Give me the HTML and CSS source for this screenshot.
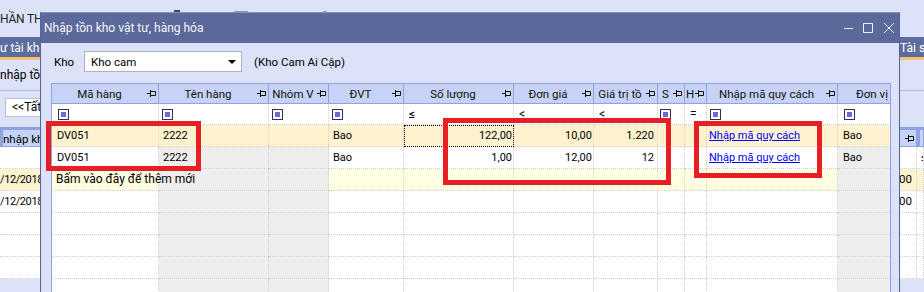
FILE: index.html
```html
<!DOCTYPE html>
<html lang="vi">
<head>
<meta charset="utf-8">
<title>Nhập tồn kho vật tư, hàng hóa</title>
<link rel="stylesheet" href="styles.css">
</head>
<body>
<div class="app">
  <div class="app-top">
    <span class="app-title">HẦN TH</span>
    <span class="tool tool-a"></span>
    <span class="tool tool-b"></span>
    <span class="tool tool-c"></span>
    <span class="tool tool-d"></span>
  </div>
  <div class="app-tabs">
    <span class="tab tab-left">ư tài kho</span>
    <span class="tab">Tài sả</span>
  </div>
  <div class="app-sub"><span class="sub-text">nhập tồn</span></div>
  <div class="app-filter"><span class="filter-box">&lt;&lt;Tất</span></div>
  <div class="app-grid">
    <div class="ag-row ag-head"><div class="ag-c">nhập kh</div><div class="ag-c ag-pin"><svg class="pin" viewBox="0 0 10 9"><path d="M0 4.5h3.5M3.5 1v7M3.5 2.5h5v4h-5"/></svg></div><div class="ag-c"></div></div>
    <div class="ag-row"><div class="ag-c"></div><div class="ag-c"></div><div class="ag-c ag-op">≤</div></div>
    <div class="ag-row ag-sel"><div class="ag-c ag-date">/12/2018</div><div class="ag-c ag-num">00</div><div class="ag-c"></div></div>
    <div class="ag-row"><div class="ag-c ag-date">/12/2018</div><div class="ag-c ag-num">00</div><div class="ag-c"></div></div>
    <div class="ag-row"><div class="ag-c"></div><div class="ag-c"></div><div class="ag-c"></div></div>
    <div class="ag-row"><div class="ag-c"></div><div class="ag-c"></div><div class="ag-c"></div></div>
    <div class="ag-row"><div class="ag-c"></div><div class="ag-c"></div><div class="ag-c"></div></div>
  </div>
</div>

<div class="dialog">
  <div class="titlebar">
    <span class="title">Nhập tồn kho vật tư, hàng hóa</span>
    <svg class="winctl" viewBox="0 0 52 11"><path d="M1 5.5h9M20.5 0.5h9v9h-9zM41 0l10 10M51 0l-10 10"/></svg>
  </div>
  <div class="dlg-body">
    <div class="kho-row">
      <span class="kho-label">Kho</span>
      <div class="combo"><span>Kho cam</span><span class="combo-arrow"></span></div>
      <span class="kho-name">(Kho Cam Ai Cập)</span>
    </div>

    <div class="grid">
      <div class="row">
        <div class="h"><span>Mã hàng</span><svg class="pin" viewBox="0 0 10 9"><path d="M0 4.5h3.5M3.5 1v7M3.5 2.5h5v4h-5"/></svg></div>
        <div class="h"><span>Tên hàng</span><svg class="pin" viewBox="0 0 10 9"><path d="M0 4.5h3.5M3.5 1v7M3.5 2.5h5v4h-5"/></svg></div>
        <div class="h"><span>Nhóm V</span><svg class="pin" viewBox="0 0 10 9"><path d="M0 4.5h3.5M3.5 1v7M3.5 2.5h5v4h-5"/></svg></div>
        <div class="h"><span>ĐVT</span><svg class="pin" viewBox="0 0 10 9"><path d="M0 4.5h3.5M3.5 1v7M3.5 2.5h5v4h-5"/></svg></div>
        <div class="h"><span>Số lượng</span><svg class="pin" viewBox="0 0 10 9"><path d="M0 4.5h3.5M3.5 1v7M3.5 2.5h5v4h-5"/></svg></div>
        <div class="h"><span>Đơn giá</span><svg class="pin" viewBox="0 0 10 9"><path d="M0 4.5h3.5M3.5 1v7M3.5 2.5h5v4h-5"/></svg></div>
        <div class="h"><span>Giá trị tồ</span><svg class="pin" viewBox="0 0 10 9"><path d="M0 4.5h3.5M3.5 1v7M3.5 2.5h5v4h-5"/></svg></div>
        <div class="h"><span>S</span><svg class="pin" viewBox="0 0 10 9"><path d="M0 4.5h3.5M3.5 1v7M3.5 2.5h5v4h-5"/></svg></div>
        <div class="h"><span>H</span><svg class="pin" viewBox="0 0 10 9"><path d="M0 4.5h3.5M3.5 1v7M3.5 2.5h5v4h-5"/></svg></div>
        <div class="h"><span>Nhập mã quy cách</span><svg class="pin" viewBox="0 0 10 9"><path d="M0 4.5h3.5M3.5 1v7M3.5 2.5h5v4h-5"/></svg></div>
        <div class="h"><span>Đơn vị</span><svg class="pin" viewBox="0 0 10 9"><path d="M0 4.5h3.5M3.5 1v7M3.5 2.5h5v4h-5"/></svg></div>
      </div>

      <div class="row f">
        <div class="c p6"><span class="chk"></span></div>
        <div class="c p3"><span class="chk"></span></div>
        <div class="c p3"><span class="chk"></span></div>
        <div class="c p3"><span class="chk"></span></div>
        <div class="c p5 op">≤</div>
        <div class="c p5 op">&lt;</div>
        <div class="c p5 op">&lt;</div>
        <div class="c p2"><span class="chk"></span></div>
        <div class="c p5 op">=</div>
        <div class="c p3"><span class="chk"></span></div>
        <div class="c p6"><span class="chk"></span></div>
      </div>

      <div class="row sel">
        <div class="c p5">DV051</div>
        <div class="c g">2222</div>
        <div class="c g"></div>
        <div class="c">Bao</div>
        <div class="c num n1 focus">122,00</div>
        <div class="c num n1">10,00</div>
        <div class="c num n3">1.220</div>
        <div class="c"></div>
        <div class="c"></div>
        <div class="c p2"><span class="lnk">Nhập mã quy cách</span></div>
        <div class="c g p5">Bao</div>
      </div>

      <div class="row">
        <div class="c p5">DV051</div>
        <div class="c g">2222</div>
        <div class="c g"></div>
        <div class="c">Bao</div>
        <div class="c num n1">1,00</div>
        <div class="c num n1">12,00</div>
        <div class="c num n3">12</div>
        <div class="c"></div>
        <div class="c"></div>
        <div class="c p2"><span class="lnk">Nhập mã quy cách</span></div>
        <div class="c g p5">Bao</div>
      </div>

      <div class="row new">
        <div class="c add">Bấm vào đây để thêm mới</div>
        <div class="c g"></div>
        <div class="c g"></div>
        <div class="c"></div>
        <div class="c"></div>
        <div class="c"></div>
        <div class="c"></div>
        <div class="c"></div>
        <div class="c"></div>
        <div class="c"></div>
        <div class="c g"></div>
      </div>

      <div class="row">
        <div class="c"></div><div class="c g"></div><div class="c g"></div><div class="c"></div><div class="c"></div><div class="c"></div><div class="c"></div><div class="c"></div><div class="c"></div><div class="c"></div><div class="c g"></div>
      </div>
      <div class="row">
        <div class="c"></div><div class="c g"></div><div class="c g"></div><div class="c"></div><div class="c"></div><div class="c"></div><div class="c"></div><div class="c"></div><div class="c"></div><div class="c"></div><div class="c g"></div>
      </div>
      <div class="row">
        <div class="c"></div><div class="c g"></div><div class="c g"></div><div class="c"></div><div class="c"></div><div class="c"></div><div class="c"></div><div class="c"></div><div class="c"></div><div class="c"></div><div class="c g"></div>
      </div>
      <div class="row">
        <div class="c"></div><div class="c g"></div><div class="c g"></div><div class="c"></div><div class="c"></div><div class="c"></div><div class="c"></div><div class="c"></div><div class="c"></div><div class="c"></div><div class="c g"></div>
      </div>
      <div class="row">
        <div class="c"></div><div class="c g"></div><div class="c g"></div><div class="c"></div><div class="c"></div><div class="c"></div><div class="c"></div><div class="c"></div><div class="c"></div><div class="c"></div><div class="c g"></div>
      </div>
    </div>
  </div>
</div>

<div class="mark mark-code"></div>
<div class="mark mark-qty"></div>
<div class="mark mark-spec"></div>
</body>
</html>
```

FILE: styles.css
```css
* { box-sizing: border-box; }

body {
  margin: 0;
  width: 924px;
  height: 292px;
  overflow: hidden;
  position: relative;
  background: #dce2f8;
  font-family: Roboto, "Liberation Sans", sans-serif;
  font-size: 11px;
  color: #000;
}

/* ---------- background application ---------- */
.app-top {
  height: 37px;
  display: flex;
  align-items: flex-start;
}
.app-title {
  flex: 0 0 40px;
  padding-top: 11px;
  font-size: 12px;
  line-height: 16px;
  letter-spacing: -0.2px;
  color: #1e1e1e;
  white-space: nowrap;
}
.tool { display: block; margin-top: 10px; height: 14px; }
.tool-a { width: 6px; margin-left: 132px; background: #2f4a8c; }
.tool-b { width: 16px; margin-left: 53px; margin-top: 11px; border: 1px solid #6d9ad6; border-radius: 2px; }
.tool-c { width: 8px; height: 8px; margin-left: 72px; margin-top: 11px; border: 1px solid #8c90a8; border-radius: 50%; }
.tool-d { width: 16px; margin-left: 117px; margin-top: 12px; background: #d23b3b; }

.app-tabs {
  height: 23px;
  display: grid;
  grid-template-columns: 899px 1fr;
  background: #5d6c9e;
  border-bottom: 3px solid #f3c170;
  color: #fff;
  font-size: 12px;
  line-height: 22px;
}
.tab { white-space: nowrap; padding-left: 1px; }
.tab-left { padding-left: 0; }

.app-sub {
  height: 31px;
  padding-top: 8px;
  font-size: 12px;
  line-height: 14px;
  border-bottom: 1px solid #b3bcdf;
}
.sub-text { display: block; white-space: nowrap; }
.app-filter { height: 36px; padding: 7px 0 0 5px; }
.filter-box {
  display: block;
  width: 36px;
  height: 19px;
  background: #fff;
  border: 1px solid #b9c0da;
  border-right: 0;
  padding-left: 6px;
  font-size: 12px;
  line-height: 17px;
  white-space: nowrap;
}

.ag-row {
  display: grid;
  grid-template-columns: 840px 77px 1fr;
  height: 22px;
  background: #fff;
}
.ag-head { height: 20px; background: #c6d2f6; }
.ag-sel { background: #fef2cf; }
.ag-c {
  border-bottom: 1px dotted #cdd0d8;
  border-right: 1px dotted #cdd0d8;
  white-space: nowrap;
  overflow: hidden;
  line-height: 21px;
  font-size: 11.5px;
}
.ag-head .ag-c { border-color: #8ea2e4; border-style: solid; line-height: 19px; }
.ag-date { font-size: 11px; letter-spacing: -0.4px; }
.ag-pin { display: flex; align-items: center; justify-content: flex-end; padding-right: 1px; }
.ag-num { text-align: right; padding-right: 4px; }
.ag-op { padding-left: 4px; }

/* ---------- dialog window ---------- */
.dialog {
  position: absolute;
  left: 40px;
  top: 12px;
  width: 860px;
  height: 292px;
  border: 1px solid #55659a;
  border-top-color: #8a92b2;
  background: #dce2f8;
}
.titlebar {
  height: 30px;
  background: #5b6a9a;
  display: flex;
  align-items: flex-start;
  padding: 0 4px 0 3px;
  color: #f4f5fa;
  font-size: 12px;
  line-height: 31px;
}
.title { flex: 1; }
.winctl {
  width: 52px;
  height: 11px;
  margin-top: 10px;
  fill: none;
  stroke: #eef0f8;
  stroke-width: 1;
}

.dlg-body { padding: 8px 7px 0 10px; }

.kho-row {
  display: flex;
  align-items: center;
  height: 21px;
  padding-left: 3px;
  font-size: 11.5px;
}
.kho-label { width: 30px; }
.combo {
  width: 158px;
  height: 21px;
  background: #fff;
  border: 1px solid #a9b0c8;
  display: flex;
  align-items: center;
  justify-content: space-between;
  padding: 0 5px 0 6px;
}
.combo-arrow {
  width: 0;
  height: 0;
  border-left: 4px solid transparent;
  border-right: 4px solid transparent;
  border-top: 4px solid #000;
}
.kho-name { margin-left: 12px; }

.grid {
  margin-top: 11px;
  width: 840px;
  border: 1px solid #8ea2e4;
  border-bottom: 0;
  display: grid;
  grid-template-columns: 107px 110px 60px 75px 110px 80px 64px 27px 22px 131px 80px;
  overflow: hidden;
}
.row { display: contents; }

.h {
  height: 20px;
  background: #c6d2f6;
  border-right: 1px solid #8ea2e4;
  border-bottom: 1px solid #8ea2e4;
  display: flex;
  align-items: center;
  padding-right: 1px;
  color: #111;
  font-size: 11.5px;
  white-space: nowrap;
  overflow: hidden;
}
.h span { flex: 1; text-align: center; overflow: hidden; }
.pin {
  flex: 0 0 10px;
  width: 10px;
  height: 9px;
  fill: none;
  stroke: #111;
  stroke-width: 1;
}

.c {
  height: 22px;
  background: #fff;
  border-right: 1px dotted #d0d0d0;
  border-bottom: 1px dotted #d0d0d0;
  line-height: 21px;
  padding-left: 4px;
  white-space: nowrap;
  overflow: hidden;
}
.f .c { height: 21px; display: flex; align-items: center; line-height: 20px; }
.new .c { background: #fffde2; }
.c.g { background: #eeeeee; }
.sel .c { background: #fef2cf; }

.p2 { padding-left: 2px; }
.p3 { padding-left: 3px; }
.p5 { padding-left: 5px; }
.p6 { padding-left: 6px; }
.op { font-size: 12px; }

.num { text-align: right; }
.n1 { padding-right: 1px; }
.n3 { padding-right: 3px; }

.focus { outline: 1px dotted #000; outline-offset: -1px; }

.lnk { color: #0000ff; text-decoration: underline; }

.add { overflow: visible; position: relative; z-index: 1; font-size: 12px; }

.chk {
  display: block;
  width: 11px;
  height: 11px;
  border: 1px solid #30305e;
  padding: 2px;
  background: #6b69d2;
  background-clip: content-box;
}

/* ---------- red annotation boxes ---------- */
.mark {
  position: absolute;
  border: 5px solid #e81e25;
  z-index: 5;
}
.mark-code { left: 46px; top: 121px; width: 155px; height: 50px; }
.mark-qty { left: 443px; top: 118px; width: 228px; height: 67px; }
.mark-spec { left: 694px; top: 121px; width: 128px; height: 57px; }
```
